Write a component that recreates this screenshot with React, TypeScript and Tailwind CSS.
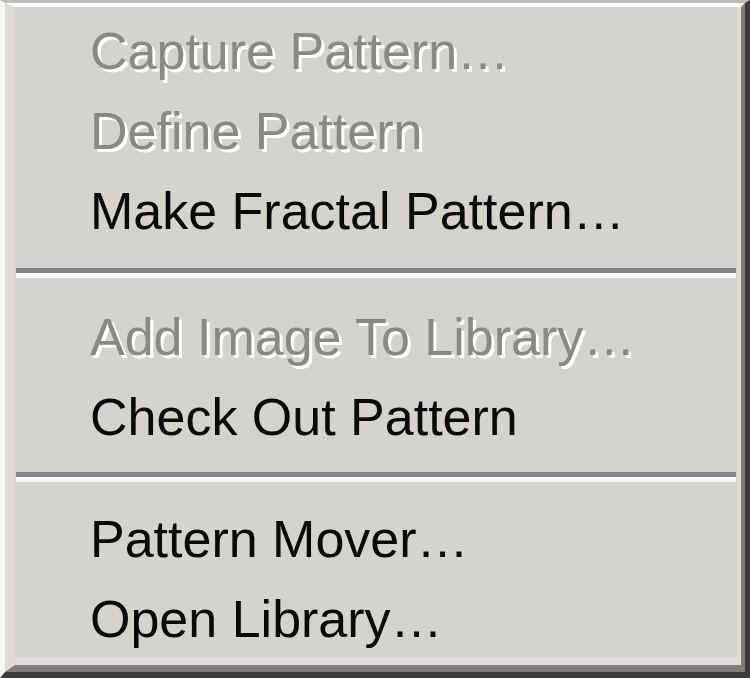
type Entry = { label: string; disabled?: boolean } | "sep";

const entries: Entry[] = [
  { label: "Capture Pattern…", disabled: true },
  { label: "Define Pattern", disabled: true },
  { label: "Make Fractal Pattern…" },
  "sep",
  { label: "Add Image To Library…", disabled: true },
  { label: "Check Out Pattern" },
  "sep",
  { label: "Pattern Mover…" },
  { label: "Open Library…" },
];

function MenuItem({ label, disabled }: { label: string; disabled?: boolean }) {
  return (
    <div
      className={
        disabled
          ? "h-[80px] pl-[75px] leading-[80px] whitespace-nowrap text-[#8a8986] [text-shadow:3px_3px_0_#ffffff]"
          : "h-[80px] pl-[75px] leading-[80px] whitespace-nowrap text-[#0a0a0a]"
      }
    >
      {label}
    </div>
  );
}

function Separator({ top, bottom }: { top: string; bottom: string }) {
  return (
    <div className={`${top} ${bottom} px-[1px]`}>
      <div className="h-[5px] bg-[#86838a]" />
      <div className="h-[5px] bg-[#fbfafa]" />
    </div>
  );
}

export default function App() {
  let sepCount = 0;
  return (
    <div className="w-[750px] h-[678px] overflow-hidden bg-[#d4d3cd]">
      {/* outer frame */}
      <div className="w-full h-full border-t-[3px] border-t-[#bfbebb] border-l-[5px] border-l-[#f6f6f2] border-r-[5px] border-r-[#3e3a3b] border-b-[6px] border-b-[#3f3b3c]">
        {/* inner frame */}
        <div className="w-full h-full border-t-[4px] border-t-[#ffffff] border-l-[10px] border-l-[#dcdcd4] border-r-[4px] border-r-[#7e7b7a] border-b-[7px] border-b-[#7f7c7b]">
          <div className="w-full h-full border-r-[4px] border-r-[#dfddd7] border-b-[8px] border-b-[#dfddd7]">
            <div className="h-full bg-[#d4d3cd] pt-[4px] text-[52px] font-['Liberation_Sans',Arial,sans-serif]">
              {entries.map((e, i) => {
                if (e === "sep") {
                  sepCount += 1;
                  return sepCount === 1 ? (
                    <Separator key={i} top="mt-[17px]" bottom="mb-[19px]" />
                  ) : (
                    <Separator key={i} top="mt-[15px]" bottom="mb-[17px]" />
                  );
                }
                return <MenuItem key={i} label={e.label} disabled={e.disabled} />;
              })}
            </div>
          </div>
        </div>
      </div>
    </div>
  );
}
